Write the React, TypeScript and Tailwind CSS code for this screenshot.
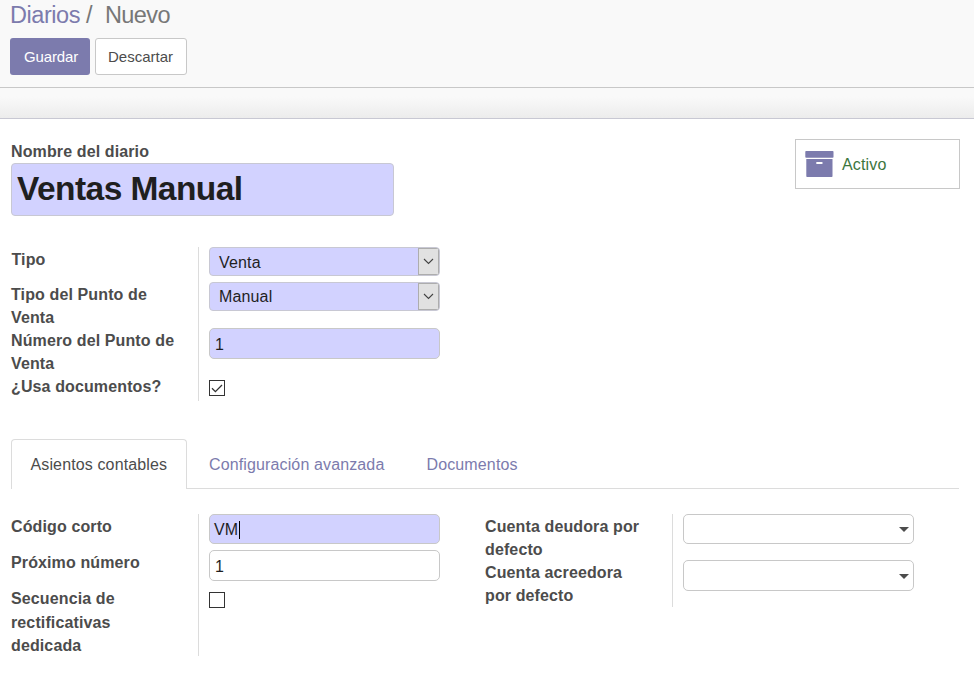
import type { ReactNode } from "react";

function Caption({ children, className = "" }: { children: ReactNode; className?: string }) {
  return (
    <span className={`block h-[23px] whitespace-nowrap text-base leading-[23px] font-bold tracking-[0.12px] text-[#4c4c4c] ${className}`}>
      {children}
    </span>
  );
}

function Select({ value, lineClass = "leading-[27px]" }: { value: string; lineClass?: string }) {
  return (
    <div className="flex h-[29px] w-[231px] overflow-hidden rounded-[4px] border border-[#c8c8d3] bg-[#d2d2ff]">
      <span className={`grow pl-[9px] text-base tracking-[0.15px] text-[#1f1f1f] ${lineClass}`}>{value}</span>
      <span className="flex w-[21px] items-center justify-center border border-[#adadad] bg-[#e1e1e1]">
        <svg width="11" height="7" viewBox="0 0 11 7" fill="none" stroke="#444" strokeWidth="1.1">
          <path d="M1 1l4.5 4.5L10 1" />
        </svg>
      </span>
    </div>
  );
}

function Field({ children, className = "" }: { children?: ReactNode; className?: string }) {
  return (
    <div className={`flex w-[231px] items-center rounded-[5px] border border-[#c8c8c8] pt-[2px] pl-[5px] text-base text-[#1f1f1f] ${className}`}>
      {children}
    </div>
  );
}

function Dropdown({ className = "" }: { className?: string }) {
  return (
    <div className={`flex w-[231px] items-center justify-end rounded-[5px] border border-[#c8c8c8] pr-1 ${className}`}>
      <svg width="10" height="5" viewBox="0 0 10 5" fill="#4c4c4c">
        <path d="M0 0h10L5 5z" />
      </svg>
    </div>
  );
}

function Checkbox({ checked = false, className = "" }: { checked?: boolean; className?: string }) {
  return (
    <div className={`flex size-4 items-center justify-center border border-[#333] bg-white ${className}`}>
      {checked && (
        <svg width="12" height="9" viewBox="0 0 12 9" fill="none" stroke="#333" strokeWidth="1.3">
          <path d="M1 4.3l3.4 3.4L11 1" />
        </svg>
      )}
    </div>
  );
}

export default function App() {
  return (
    <div className="h-[675px] w-[974px] overflow-hidden bg-white font-['Liberation_Sans',Arial,sans-serif]">
      <header className="h-[88px] border-b border-[#c8c8c8] bg-[#f9f9f9] pl-[10px]">
        <div className="flex h-[38px] whitespace-pre text-[23.5px] leading-[30px] text-[#777]">
          <span className="w-[76px] tracking-[-0.45px] text-[#7c7bad]">Diarios</span>
          <span className="w-[19px]">/</span>
          <span className="tracking-[-0.6px]">Nuevo</span>
        </div>
        <div className="flex gap-[5px]">
          <button className="h-[37px] w-20 rounded-[3px] bg-[#7c7bad] pt-px pl-[2px] text-[15px] tracking-[-0.15px] text-white">
            Guardar
          </button>
          <button className="h-[37px] w-[92px] rounded-[3px] border border-[#c8c8c8] bg-white px-0 pt-px pr-px text-[15px] text-[#4c4c4c]">
            Descartar
          </button>
        </div>
      </header>
      <div className="h-[31px] border-b border-[#c8c8d3] bg-linear-to-b from-[#f9f9f9] from-30% to-[#ececec]" />

      <main className="pl-[11px]">
        <div className="flex h-[128px] justify-between pt-[21px] pr-[14px]">
          <div>
            <Caption>Nombre del diario</Caption>
            <div className="h-[53px] w-[383px] rounded-[4px] border border-[#c8c8d3] bg-[#d2d2ff] pl-[5px] text-[33.5px] leading-[50px] font-bold tracking-[-0.55px] text-[#1f1f1f]">
              Ventas Manual
            </div>
          </div>
          <div className="-mt-px flex h-[50px] w-[165px] items-center border border-[#c8c8c8] pl-[9px]">
            <svg width="29" height="26" viewBox="0 0 29 26" fill="#7c7bad">
              <rect x="0.3" width="28.2" height="6.7" rx="0.8" />
              <path d="M1.3 8h26.2v17.2q0 .8-.8.8H2.1q-.8 0-.8-.8zM12 11q-.9 0-.9 1t.9 1h4.8q.9 0 .9-1t-.9-1z" fillRule="evenodd" />
            </svg>
            <span className="ml-2 pt-[2px] text-base tracking-[0.15px] text-[#3c763d]">Activo</span>
          </div>
        </div>

        <section className="flex h-[154px]">
          <div className="w-[188px] border-r border-[#dcdcdc] pt-px">
            <Caption className="mb-3 pl-[0.5px]">Tipo</Caption>
            <Caption>Tipo del Punto de</Caption>
            <Caption>Venta</Caption>
            <Caption>Número del Punto de</Caption>
            <Caption>Venta</Caption>
            <Caption>¿Usa documentos?</Caption>
          </div>
          <div className="pl-[10px]">
            <div className="flex flex-col gap-[6px]">
              <Select value="Venta" lineClass="leading-[30px]" />
              <Select value="Manual" lineClass="leading-[28px]" />
            </div>
            <Field className="mt-[17px] h-[31px] bg-[#d2d2ff]">1</Field>
            <Checkbox checked className="mt-[21px]" />
          </div>
        </section>

        <nav className="mt-[38px] flex h-[50px] w-[948px] text-base leading-[50px] tracking-[0.13px]">
          <span className="w-[176px] rounded-t-[4px] border border-b-0 border-[#dcdcdc] pl-[18.5px] text-[#4c4c4c]">
            Asientos contables
          </span>
          <div className="flex grow border-b border-[#dcdcdc] leading-[52px] text-[#7c7bad]">
            <span className="w-[217px] pl-[22px]">Configuración avanzada</span>
            <span className="pl-[22.5px]">Documentos</span>
          </div>
        </nav>

        <section className="mt-[25px] flex">
          <div className="h-[142px] w-[188px] border-r border-[#dcdcdc] pt-px">
            <Caption className="mb-[13px]">Código corto</Caption>
            <Caption className="mb-[13px]">Próximo número</Caption>
            <Caption className="mb-px">Secuencia de</Caption>
            <Caption>rectificativas</Caption>
            <Caption>dedicada</Caption>
          </div>
          <div className="pl-[10px]">
            <Field className="h-[30px] bg-[#d2d2ff]">
              <span className="-ml-px">VM</span>
              <span className="ml-px h-[18px] w-px bg-black" />
            </Field>
            <Field className="mt-[6px] h-[31px]">1</Field>
            <Checkbox className="mt-[11px]" />
          </div>
          <div className="ml-[45px] h-[93px] w-[188px] border-r border-[#dcdcdc] pt-px">
            <Caption>Cuenta deudora por</Caption>
            <Caption>defecto</Caption>
            <Caption>Cuenta acreedora</Caption>
            <Caption>por defecto</Caption>
          </div>
          <div className="pl-[10px]">
            <Dropdown className="h-[30px]" />
            <Dropdown className="mt-4 h-[31px] pt-px" />
          </div>
        </section>
      </main>
    </div>
  );
}
